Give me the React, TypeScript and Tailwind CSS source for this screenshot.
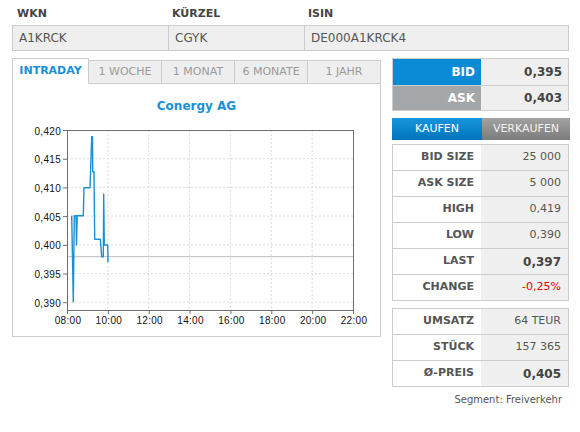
import React from 'react';

const font = { fontFamily: '"DejaVu Sans", Verdana, sans-serif' };

const tabs = ['INTRADAY', '1 WOCHE', '1 MONAT', '6 MONATE', '1 JAHR'];

const stats: { label: string; value: string; tone?: 'bold' | 'red' }[] = [
  { label: 'BID SIZE', value: '25 000' },
  { label: 'ASK SIZE', value: '5 000' },
  { label: 'HIGH', value: '0,419' },
  { label: 'LOW', value: '0,390' },
  { label: 'LAST', value: '0,397', tone: 'bold' },
  { label: 'CHANGE', value: '-0,25%', tone: 'red' },
];

const volume: { label: string; value: string; tone?: 'bold' | 'red' }[] = [
  { label: 'UMSATZ', value: '64 TEUR' },
  { label: 'STÜCK', value: '157 365' },
  { label: 'Ø-PREIS', value: '0,405', tone: 'bold' },
];

// plot box inside the svg
const PX0 = 54;
const PX1 = 340;
const PY0 = 17;
const PY1 = 197;
const STEP_X = (PX1 - PX0) / 7;
const STEP_Y = 28.7;

const yLabels = ['0,420', '0,415', '0,410', '0,405', '0,400', '0,395', '0,390'];
const xLabels = ['08:00', '10:00', '12:00', '14:00', '16:00', '18:00', '20:00', '22:00'];

const ticks = [
  [58.7, 102.7], [60.3, 188.7], [61.3, 102.7], [63, 102.7], [63.5, 132], [64.2, 102.7],
  [70.3, 102.7], [71, 74.7], [77, 74.7], [78.7, 23.7], [79.5, 23.7], [79.7, 58.7],
  [81, 58.7], [81.7, 126.3], [87.3, 126.3], [88.7, 143.7], [90.3, 143.7], [90.7, 81],
  [91.3, 132], [94.7, 132], [95, 149.3],
];

function IntradayChart() {
  return (
    <svg width={367} height={223} className="block">
      {yLabels.map((_, i) =>
        i > 0 ? (
          <line key={'h' + i} x1={PX0} x2={PX1} y1={PY0 + i * STEP_Y} y2={PY0 + i * STEP_Y} stroke="#dcdcdc" strokeDasharray="2 2" />
        ) : null,
      )}
      {xLabels.map((_, i) =>
        i > 0 && i < 7 ? (
          <line key={'v' + i} x1={PX0 + i * STEP_X} x2={PX0 + i * STEP_X} y1={PY0} y2={PY1} stroke="#dcdcdc" strokeDasharray="2 2" />
        ) : null,
      )}
      <line x1={PX0} x2={PX1} y1={143.7} y2={143.7} stroke="#bdbdbd" />
      <rect x={PX0 + 0.5} y={PY0 + 0.5} width={PX1 - PX0} height={PY1 - PY0} fill="none" stroke="#6f6f6f" />
      {xLabels.map((_, i) => (
        <line key={'t' + i} x1={PX0 + 0.5 + i * STEP_X} x2={PX0 + 0.5 + i * STEP_X} y1={PY1} y2={PY1 + 4} stroke="#6f6f6f" />
      ))}
      {yLabels.map((_, i) => (
        <line key={'l' + i} x1={PX0 - 4} x2={PX0} y1={PY0 + 0.5 + i * STEP_Y} y2={PY0 + 0.5 + i * STEP_Y} stroke="#6f6f6f" />
      ))}
      <polyline
        points={ticks.map((p) => p.join(',')).join(' ')}
        fill="none"
        stroke="#1b8fd6"
        strokeWidth={1.4}
        strokeLinejoin="round"
      />
      <g style={{ fontFamily: '"Liberation Sans", Arial, sans-serif', fontSize: 10, letterSpacing: 0.3 }} fill="#111">
        {yLabels.map((t, i) => (
          <text key={t} x={48} y={PY0 + i * STEP_Y + 4.5} textAnchor="end">
            {t}
          </text>
        ))}
        {xLabels.map((t, i) => (
          <text key={t} x={PX0 + 1 + i * STEP_X} y={211} textAnchor="middle">
            {t}
          </text>
        ))}
      </g>
    </svg>
  );
}

function StatTable({ rows }: { rows: typeof stats }) {
  return (
    <div className="border-x border-t border-[#cccccc]">
      {rows.map((r) => (
        <div key={r.label} className="grid h-[26px] grid-cols-[88px_1fr] border-b border-[#cccccc] text-[11px]">
          <div className="flex items-center justify-end bg-white pr-[7px] font-bold text-[#555]">{r.label}</div>
          <div
            className={
              r.tone === 'red'
                ? 'flex items-center justify-end bg-[#f0f0f0] pr-[7px] text-[#e00000]'
                : r.tone === 'bold'
                  ? 'flex items-center justify-end bg-[#f0f0f0] pr-[7px] text-[12px] font-bold text-[#444]'
                  : 'flex items-center justify-end bg-[#f0f0f0] pr-[7px] text-[#555]'
            }
          >
            {r.value}
          </div>
        </div>
      ))}
    </div>
  );
}

export default function App() {
  return (
    <div className="h-[432px] w-[580px] overflow-hidden bg-white pl-[12px]" style={font}>
      {/* identifiers */}
      <div className="w-[557px]">
        <div className="grid h-[25px] grid-cols-[155px_136px_1fr] pt-[7px] text-[11px] font-bold leading-[14px] text-[#444]">
          <span className="pl-[5px]">WKN</span>
          <span className="pl-[5px]">KÜRZEL</span>
          <span className="pl-[5px]">ISIN</span>
        </div>
        <div className="grid h-[26px] grid-cols-[155px_136px_1fr] border border-[#cccccc] bg-[#efefef] text-[12px] text-[#555]">
          <span className="flex items-center pl-[6px]">A1KRCK</span>
          <span className="flex items-center border-l border-[#cccccc] pl-[6px]">CGYK</span>
          <span className="flex items-center border-l border-[#cccccc] pl-[6px]">DE000A1KRCK4</span>
        </div>
      </div>

      <div className="mt-[7px] flex gap-[11px]">
        {/* chart panel */}
        <div className="w-[369px]">
          <div className="flex h-[26px]">
            {tabs.map((t, i) =>
              i === 0 ? (
                <div key={t} className="flex w-[77px] items-center justify-center border-x border-t border-[#cccccc] bg-white text-[11px] font-bold text-[#1b8fd6]">
                  {t}
                </div>
              ) : (
                <div
                  key={t}
                  className="mt-[2px] flex w-[73px] items-center justify-center border-y border-r border-[#cccccc] bg-[#eeeeee] text-[11px] text-[#9a9a9a]"
                >
                  {t}
                </div>
              ),
            )}
          </div>
          <div className="h-[253px] border-x border-b border-[#cccccc]">
            <div className="pt-[15px] text-center text-[12px] font-bold leading-[14px] text-[#1b8fd6]">Conergy AG</div>
            <IntradayChart />
          </div>
        </div>

        {/* quotes */}
        <div className="w-[177px]">
          <div className="border border-[#cccccc]">
            <div className="grid h-[26px] grid-cols-[88px_1fr] text-[12px] font-bold">
              <div className="flex items-center justify-end bg-[#0b8ad5] pr-[6px] text-white">BID</div>
              <div className="flex items-center justify-end bg-[#efefef] pr-[6px] text-[#444]">0,395</div>
            </div>
            <div className="grid h-[25px] grid-cols-[88px_1fr] border-t border-[#cccccc] text-[12px] font-bold">
              <div className="flex items-center justify-end bg-[#a3a7a9] pr-[6px] text-white">ASK</div>
              <div className="flex items-center justify-end bg-[#efefef] pr-[6px] text-[#444]">0,403</div>
            </div>
          </div>

          <div className="mt-[7px] grid h-[22px] w-[178px] grid-cols-[90px_1fr] text-[11px]">
            <button className="flex items-center justify-center bg-gradient-to-b from-[#1696dc] to-[#0073bd] text-white">KAUFEN</button>
            <button className="flex items-center justify-center bg-gradient-to-b from-[#a2a2a2] to-[#7c7c7c] text-[#f2f2f2]">VERKAUFEN</button>
          </div>

          <div className="mt-[4px]">
            <StatTable rows={stats} />
          </div>
          <div className="mt-[7px]">
            <StatTable rows={volume} />
          </div>
          <div className="mt-[6px] pr-[7px] text-right text-[10px] leading-[14px] text-[#555]">Segment: Freiverkehr</div>
        </div>
      </div>
    </div>
  );
}
